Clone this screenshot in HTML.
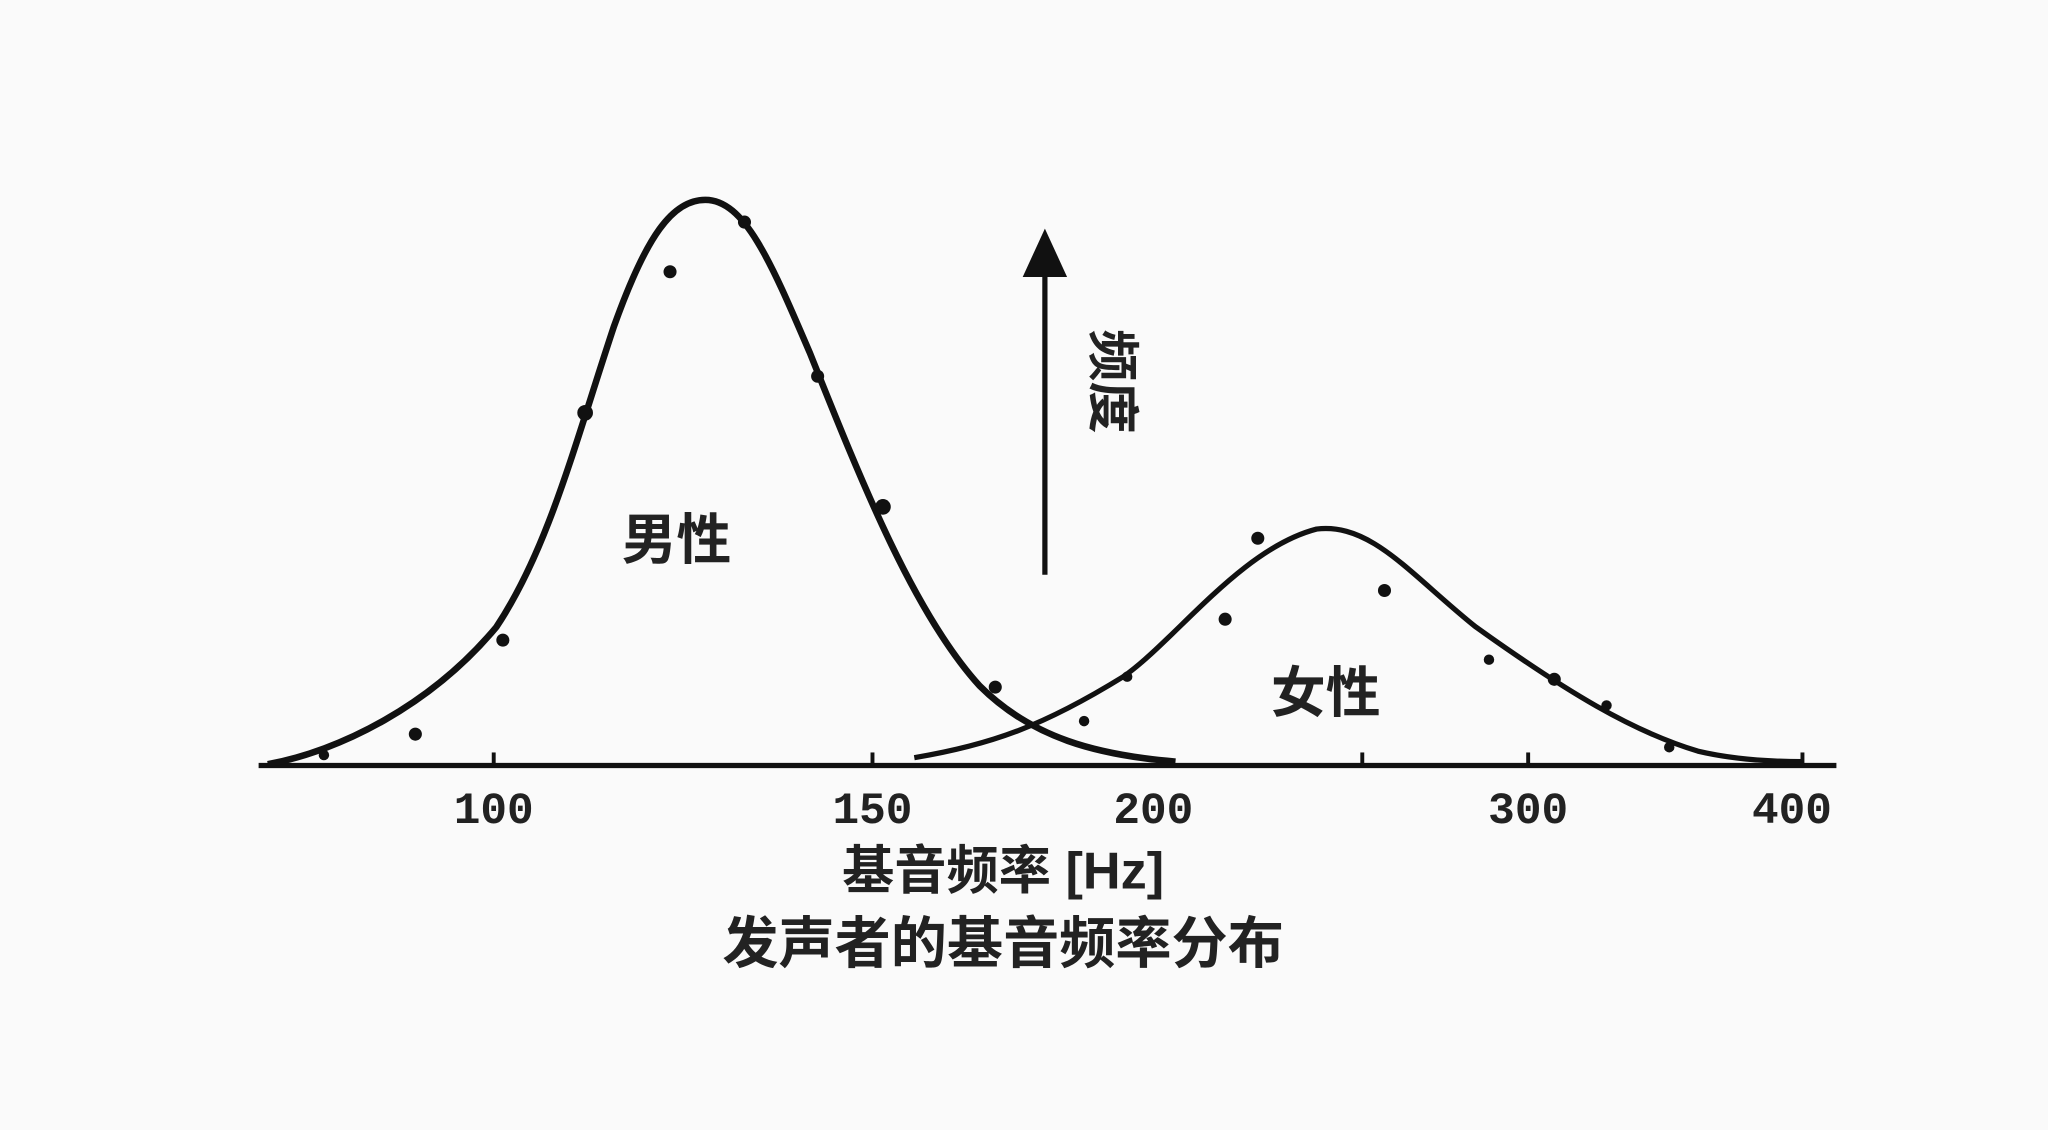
<!DOCTYPE html>
<html><head><meta charset="utf-8"><style>
html,body{margin:0;padding:0;background:#fafafa;}
svg{display:block}
</style></head><body>
<svg width="2048" height="1130" viewBox="0 0 1568 865" preserveAspectRatio="none" xmlns="http://www.w3.org/2000/svg">
<rect width="1568" height="865" fill="#fafafa"/>
<g stroke="#111" fill="none" stroke-width="4">
<line x1="198" y1="586" x2="1406" y2="586" stroke-width="4"/>
<path d="M205,585 C260,575 330,540 380,480 C420,420 440,340 470,250 C495,180 515,153 540,153 C570,153 590,200 620,270 C660,370 700,470 750,525 C790,565 840,578 900,583" stroke-width="5"/>
<path d="M700,580 C760,570 800,555 860,518 C900,490 950,420 1008,405 C1050,400 1080,440 1130,480 C1200,530 1250,560 1300,575 C1330,582 1360,583 1380,583" stroke-width="4" stroke-dasharray="none"/>
<line x1="378" y1="576" x2="378" y2="586" stroke-width="3"/>
<line x1="668" y1="576" x2="668" y2="586" stroke-width="3"/>
<line x1="1043" y1="576" x2="1043" y2="586" stroke-width="3"/>
<line x1="1170" y1="576" x2="1170" y2="586" stroke-width="3"/>
<line x1="1380" y1="576" x2="1380" y2="586" stroke-width="3"/>
<line x1="800" y1="440" x2="800" y2="205" stroke-width="4"/>
</g>
<polygon points="800,175 783,212 817,212" fill="#111"/>
<g fill="#111">
<circle cx="513" cy="208" r="5"/><circle cx="570" cy="170" r="5"/><circle cx="448" cy="316" r="6"/>
<circle cx="626" cy="288" r="5"/><circle cx="676" cy="388" r="6"/><circle cx="385" cy="490" r="5"/>
<circle cx="318" cy="562" r="5"/><circle cx="762" cy="526" r="5"/><circle cx="248" cy="578" r="4"/>
<circle cx="963" cy="412" r="5"/><circle cx="938" cy="474" r="5"/><circle cx="863" cy="518" r="4"/>
<circle cx="1060" cy="452" r="5"/><circle cx="1140" cy="505" r="4"/><circle cx="1190" cy="520" r="5"/>
<circle cx="1230" cy="540" r="4"/><circle cx="1278" cy="572" r="4"/><circle cx="830" cy="552" r="4"/>
</g>
<g font-family="'Liberation Mono','Noto Sans CJK SC',monospace" font-size="34" fill="#222" text-anchor="middle" font-weight="bold">
<text x="378" y="630">100</text>
<text x="668" y="630">150</text>
<text x="883" y="630">200</text>
<text x="1170" y="630">300</text>
<text x="1372" y="630">400</text>
</g>
<g font-family="'Liberation Sans','Noto Sans CJK SC',sans-serif" fill="#222" text-anchor="middle" font-weight="bold">
<text x="518" y="428" font-size="42">男性</text>
<text x="1015" y="545" font-size="42">女性</text>
<text x="768" y="680" font-size="40">基音频率 [Hz]</text>
<text x="768" y="737" font-size="43">发声者的基音频率分布</text>
<text transform="translate(838,292) rotate(90)" font-size="40">频度</text>
</g>
</svg>
</body></html>
